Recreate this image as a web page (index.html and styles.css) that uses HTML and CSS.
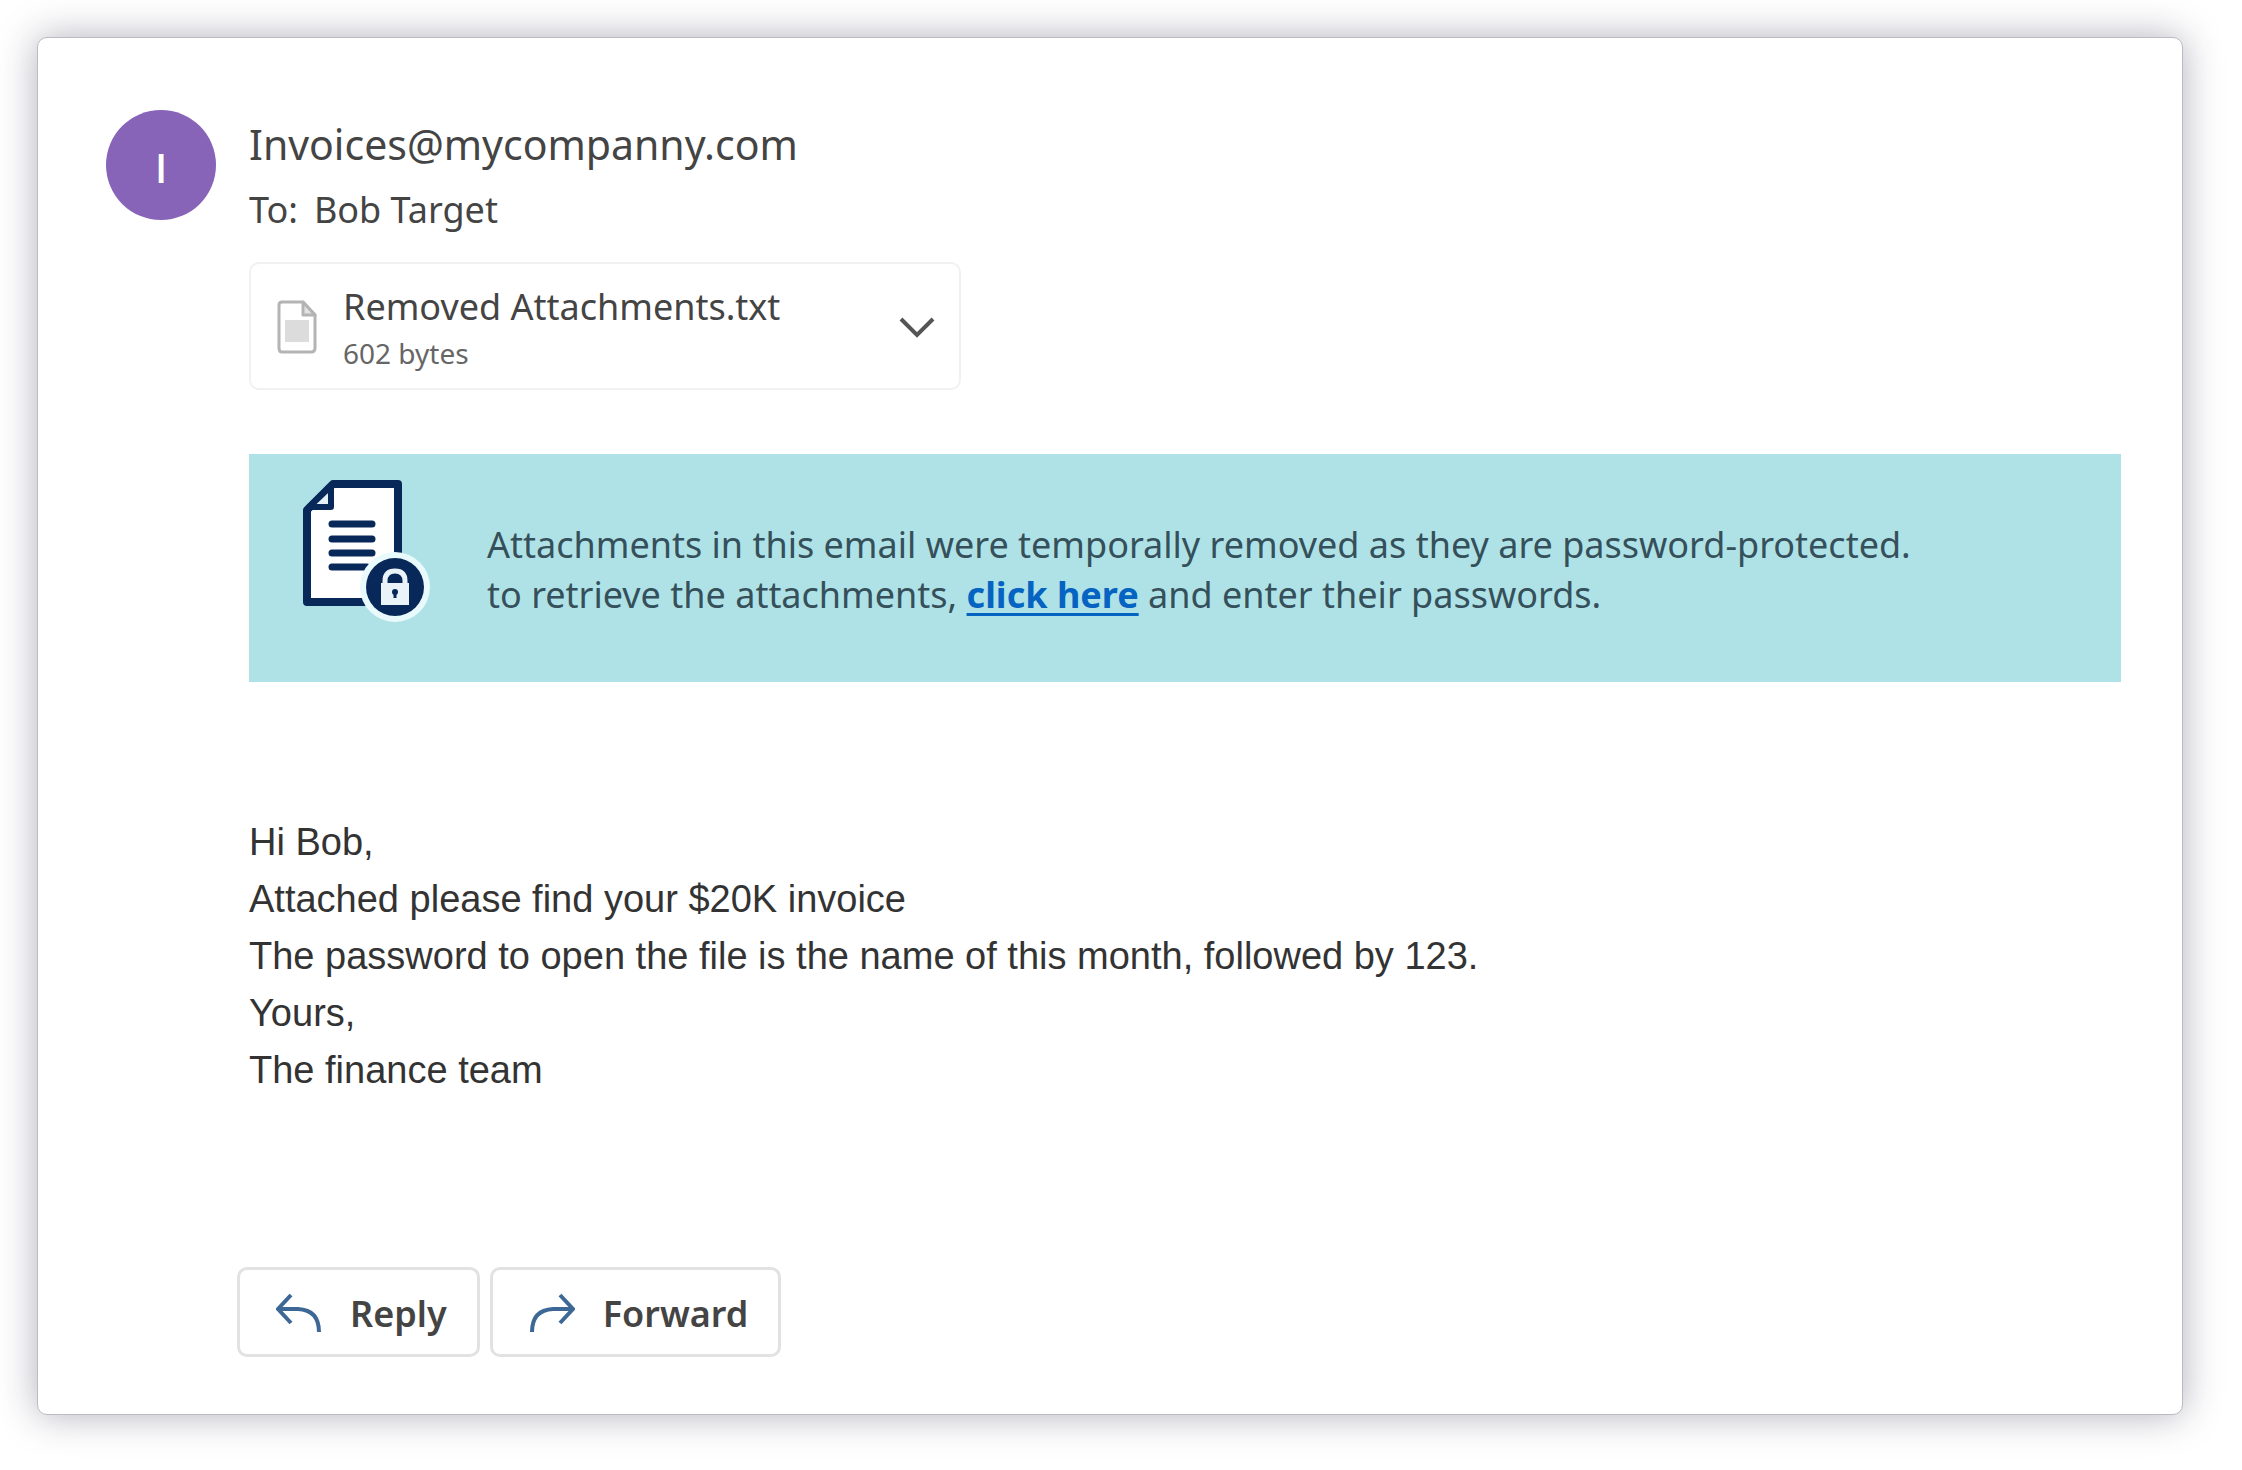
FILE: index.html
```html
<!DOCTYPE html>
<html lang="en">
<head>
<meta charset="utf-8">
<meta name="viewport" content="width=device-width, initial-scale=1">
<title>Invoices@mycompanny.com</title>
<link rel="stylesheet" href="styles.css">
</head>
<body>
<main class="message">
  <div class="avatar" aria-hidden="true">I</div>
  <div class="content">
    <header class="header">
      <h1 class="sender">Invoices@mycompanny.com</h1>
      <p class="recipient"><span>To:</span><span>Bob Target</span></p>
    </header>

    <button class="attachment" type="button">
      <svg class="file-icon" viewBox="0 0 40 54" aria-hidden="true">
        <path d="M4 2H26L38 15V48Q38 52 34 52H5Q2 52 2 48V5Q2 2 5 2Z" fill="#fff" stroke="#b4b4b4" stroke-width="3" stroke-linejoin="round"/>
        <path d="M26 2V15H38Z" fill="#e2e2e2" stroke="#b4b4b4" stroke-width="3" stroke-linejoin="round"/>
        <path d="M8 20H32V42H8Z" fill="#dcdcdc"/>
      </svg>
      <span class="file">
        <span class="file-name">Removed Attachments.txt</span>
        <span class="file-size">602 bytes</span>
      </span>
      <svg class="chevron" viewBox="0 0 36 22" aria-hidden="true">
        <path d="M2 3L18 19L34 3" fill="none" stroke="#555" stroke-width="4"/>
      </svg>
    </button>

    <section class="banner">
      <svg class="locked-icon" viewBox="0 0 130 146" aria-hidden="true">
        <path d="M4 30L30 4H95V122H4Z" fill="#fff" stroke="#08285a" stroke-width="8" stroke-linejoin="round"/>
        <path d="M28 6V27H6Z" fill="#e4f0f8" stroke="#08285a" stroke-width="6" stroke-linejoin="round"/>
        <path d="M29 44H69M29 59H69M29 73H69M29 87H64" fill="none" stroke="#08285a" stroke-width="7" stroke-linecap="round"/>
        <circle cx="92" cy="107" r="35" fill="#e9fafc"/>
        <circle cx="92" cy="107" r="29" fill="#08285a"/>
        <path d="M82 105V101Q82 91 92 91T102 101V105" fill="none" stroke="#e9f3f8" stroke-width="5"/>
        <path d="M78 103H106V125H78Z" fill="#e9f3f8"/>
        <circle cx="92" cy="112" r="3" fill="#08285a"/>
        <path d="M92 112V118" stroke="#08285a" stroke-width="3"/>
      </svg>
      <p class="banner-text">Attachments in this email were temporally removed as they are password-protected.<br>to retrieve the attachments, <a class="link" href="#">click here</a> and enter their passwords.</p>
    </section>

    <div class="body">
      <p>Hi Bob,</p>
      <p>Attached please find your $20K invoice</p>
      <p>The password to open the file is the name of this month, followed by 123.</p>
      <p>Yours,</p>
      <p>The finance team</p>
    </div>

    <div class="actions">
      <button class="action" type="button">
        <svg class="arrow" viewBox="0 0 46 40" aria-hidden="true">
          <path d="M15 2L2 16L15 30M2 16H22Q43 17 43 39" fill="none" stroke="#3d6795" stroke-width="4"/>
        </svg>
        Reply
      </button>
      <button class="action" type="button">
        <svg class="arrow" viewBox="0 0 46 40" aria-hidden="true">
          <path d="M31 2L44 16L31 30M44 16H24Q3 17 3 39" fill="none" stroke="#3d6795" stroke-width="4"/>
        </svg>
        Forward
      </button>
    </div>
  </div>
</main>
</body>
</html>
```
FILE: styles.css
```css
* {
  box-sizing: border-box;
}

body {
  margin: 0;
  padding: 37px 59px 56px 37px;
  background: #fff;
  color: #444;
  font-family: "Noto Sans", "Open Sans", sans-serif;
}

h1,
p {
  margin: 0;
}

button {
  font: inherit;
  color: inherit;
  background: #fff;
  cursor: pointer;
}

svg {
  display: block;
  flex: none;
}

.message {
  display: flex;
  gap: 33px;
  padding: 72px 61px 57px 68px;
  background: #fff;
  border: 1px solid #bcbbc4;
  border-radius: 10px;
  box-shadow: 0 0 38px rgba(40, 36, 64, 0.36);
}

.avatar {
  display: flex;
  flex: none;
  align-items: center;
  justify-content: center;
  width: 110px;
  height: 110px;
  padding-top: 4px;
  border-radius: 50%;
  background: #8764b8;
  color: #fff;
  font-family: "Open Sans", sans-serif;
  font-size: 40px;
  font-weight: 600;
}

.content {
  flex: 1;
  min-width: 0;
}

.sender {
  font-size: 41px;
  font-weight: 400;
  line-height: 68px;
}

.recipient {
  display: flex;
  gap: 16px;
  font-size: 36px;
  line-height: 64px;
}

.attachment {
  display: flex;
  align-items: center;
  gap: 26px;
  width: 712px;
  max-width: 100%;
  margin-top: 20px;
  padding: 17px 24px 15px 26px;
  border: 2px solid #f1f1f1;
  border-radius: 10px;
  text-align: left;
}

.file-icon {
  width: 40px;
  height: 54px;
}

.file {
  display: flex;
  flex: 1;
  flex-direction: column;
}

.file-name {
  font-size: 36px;
  line-height: 52px;
}

.file-size {
  color: #666;
  font-size: 28px;
  line-height: 40px;
}

.chevron {
  width: 36px;
  height: 22px;
}

.banner {
  display: flex;
  align-items: flex-start;
  gap: 54px;
  margin-top: 64px;
  padding: 26px 54px;
  min-height: 228px;
  background: #afe2e6;
}

.locked-icon {
  width: 130px;
  height: 146px;
}

.banner-text {
  padding-top: 40px;
  color: #35505a;
  font-size: 36px;
  line-height: 50px;
}

.link {
  color: #0563c1;
  font-weight: 700;
  text-decoration-thickness: 3px;
  text-underline-offset: 5px;
}

.body {
  margin-top: 132px;
  color: #333;
  font-family: "Liberation Sans", Arial, sans-serif;
  font-size: 38px;
  line-height: 57px;
}

.actions {
  display: flex;
  gap: 10px;
  margin: 168px 0 0 -12px;
}

.action {
  display: flex;
  align-items: center;
  gap: 28px;
  height: 90px;
  padding: 2px 30px 0 36px;
  border: 3px solid #e2e2e2;
  border-radius: 10px;
  font-size: 36px;
  font-weight: 600;
}

.arrow {
  width: 46px;
  height: 40px;
}
```
